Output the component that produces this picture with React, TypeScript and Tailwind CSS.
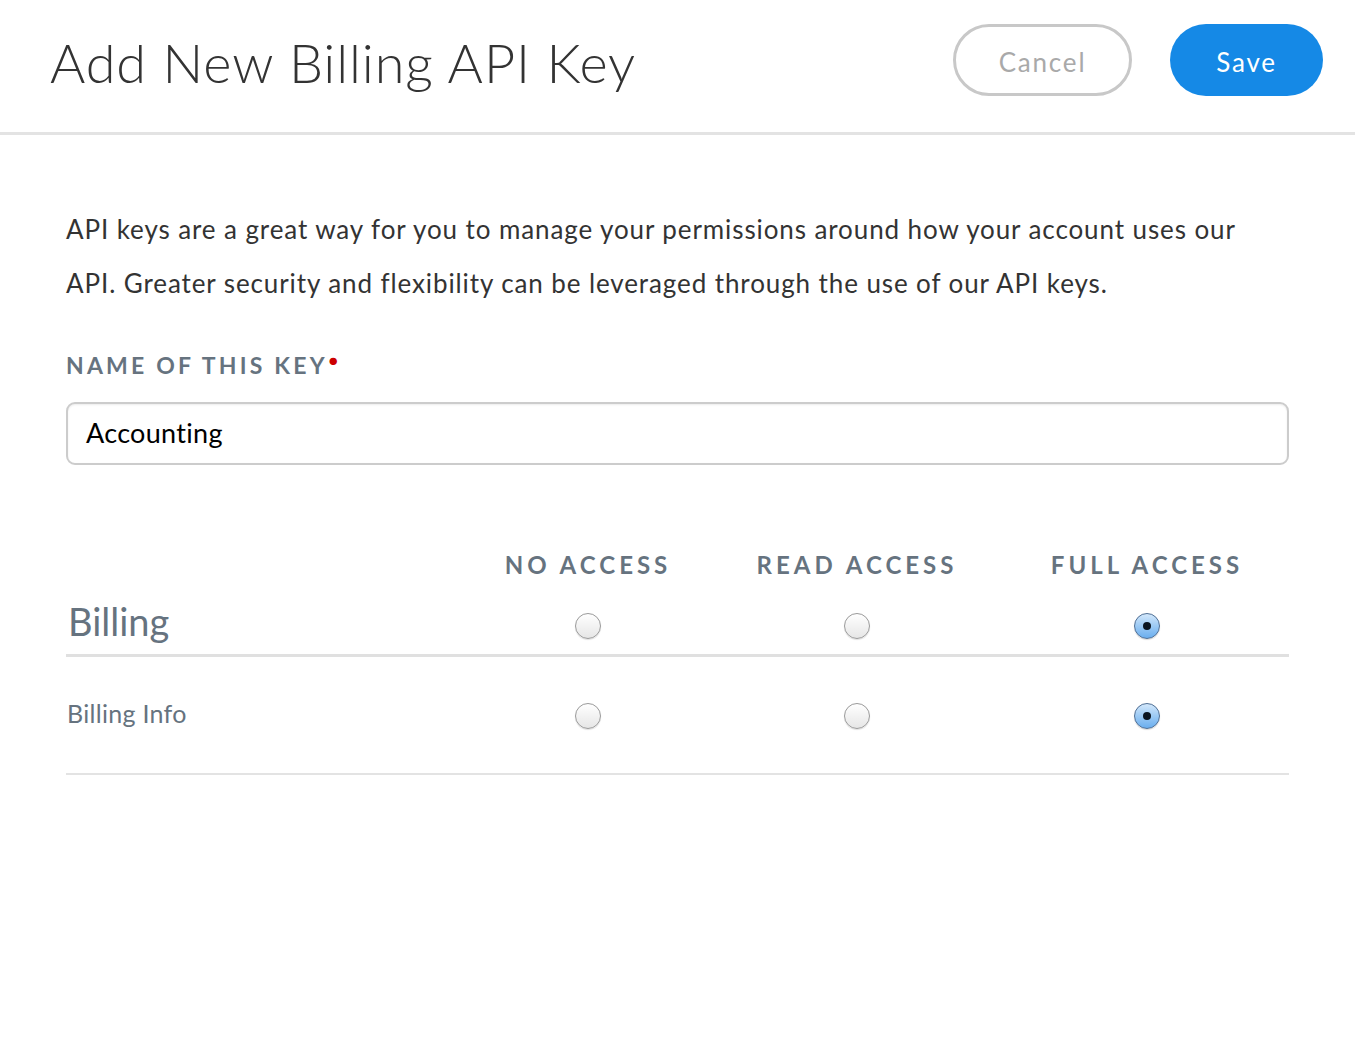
const font = { fontFamily: 'Lato, "Open Sans", sans-serif' };

function Radio({ checked }: { checked?: boolean }) {
  if (checked) {
    return (
      <span className="flex h-[26px] w-[26px] items-center justify-center rounded-full border border-[#4f6f95] bg-gradient-to-b from-[#d3e8fb] via-[#9ccaf4] to-[#6aaeef] shadow-[0_1px_1px_rgba(0,0,0,0.15)]">
        <span className="h-[8px] w-[8px] rounded-full bg-[#0b1520]" />
      </span>
    );
  }
  return (
    <span className="block h-[26px] w-[26px] rounded-full border border-[#9a9a9a] bg-gradient-to-b from-white to-[#e6e6e6] shadow-[0_1px_1px_rgba(0,0,0,0.12)]" />
  );
}

const rows = [
  { label: 'Billing', big: true },
  { label: 'Billing Info', big: false },
];

const head = 'text-center text-[24px] font-bold tracking-[4px] text-[#66737f]';

export default function App() {
  return (
    <div className="min-h-[1046px] w-[1355px] bg-white" style={font}>
      <header className="flex h-[135px] items-center justify-between border-b-[3px] border-[#e3e3e3] pl-[50px] pr-[32px]">
        <h1 className="pb-[8px] text-[54px] font-light tracking-[0.9px] text-[#333333]">
          Add New Billing API Key
        </h1>
        <div className="flex items-center gap-[38px] pb-[12px]">
          <button
            type="button"
            className="h-[72px] w-[179px] rounded-full border-[3px] border-[#c8c8c8] pt-[4px] text-[26px] tracking-[1.8px] text-[#a9a9a9]"
          >
            Cancel
          </button>
          <button
            type="button"
            className="h-[72px] w-[153px] rounded-full bg-[#1589e6] pt-[4px] text-[26px] tracking-[1.8px] text-white"
          >
            Save
          </button>
        </div>
      </header>

      <main className="px-[66px] pt-[67px]">
        <p className="max-w-[1195px] text-[26px] leading-[54px] tracking-[0.9px] text-[#333333]">
          API keys are a great way for you to manage your permissions around how your account uses our
          API. Greater security and flexibility can be leveraged through the use of our API keys.
        </p>

        <label className="mt-[38px] block text-[23px] font-bold tracking-[3.2px] text-[#66737f]">
          NAME OF THIS KEY
          <span className="relative -top-[8px] ml-[1px] text-[15px] text-[#cc0000]">●</span>
        </label>

        <div className="mt-[19px] flex h-[63px] items-center rounded-[9px] border-2 border-[#cccccc] px-[18px] shadow-[inset_0_1px_2px_rgba(0,0,0,0.08)]">
          <span className="text-[27px] tracking-[0.3px] text-black">Accounting</span>
        </div>

        <div className="mt-[82px] grid grid-cols-[387px_270px_268px_299px] items-center">
          <div />
          <div className={head}>NO ACCESS</div>
          <div className={head}>READ ACCESS</div>
          <div className={`${head} pl-[13px]`}>FULL ACCESS</div>
        </div>

        {rows.map((r) => {
          const cell = r.big ? 'flex justify-center pt-[12px]' : 'flex justify-center pt-[6px]';
          return (
            <div
              key={r.label}
              className={
                r.big
                  ? 'grid h-[74px] grid-cols-[387px_270px_268px_299px] items-center border-b-[3px] border-[#e0e0e0] pt-[4px]'
                  : 'grid h-[118px] grid-cols-[387px_270px_268px_299px] items-center border-b-2 border-[#e3e3e3] pb-[4px]'
              }
            >
              <div className={r.big ? 'pl-[2px] pt-[2px] text-[38px] text-[#66737f]' : 'pl-[1px] pt-[2px] text-[25px] tracking-[0.3px] text-[#66737f]'}>
                {r.label}
              </div>
              <div className={cell}>
                <Radio />
              </div>
              <div className={cell}>
                <Radio />
              </div>
              <div className={`${cell} pl-[13px]`}>
                <Radio checked />
              </div>
            </div>
          );
        })}
      </main>
    </div>
  );
}
